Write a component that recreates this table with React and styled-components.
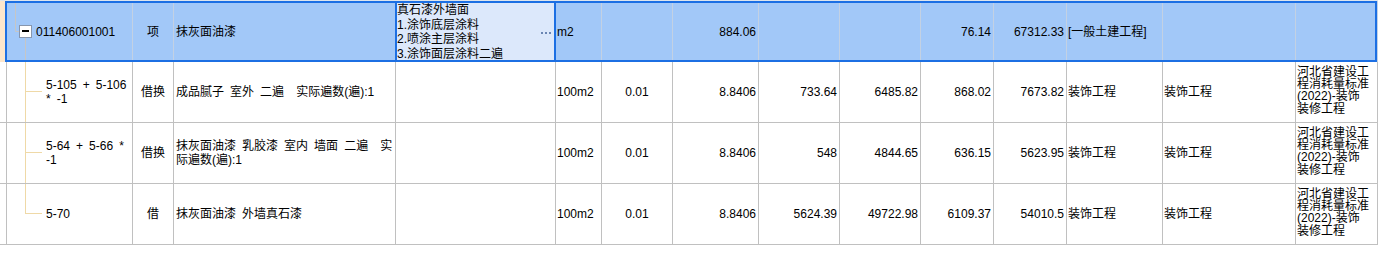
import React from "react";
import styled, { createGlobalStyle, css } from "styled-components";

const GlobalStyle = createGlobalStyle`
  *, *::before, *::after { box-sizing: border-box; }
  html, body { margin: 0; padding: 0; background: #fff; }
  body {
    font-family: "Liberation Sans", "Noto Sans CJK SC", sans-serif;
    font-size: 12px;
    color: #000;
  }
`;

const COLS = "7px 126px 41px 222px 160px 46px 71px 86px 81px 81px 73px 73px 96px 133px 82px";
const BLUE = "#1c6fe3";
const LINE = "#c0c0c0";
const TAN = "#efd9a7";

const Table = styled.div`
  width: 1378px;
`;

const Row = styled.div`
  display: grid;
  grid-template-columns: ${COLS};
  height: 61px;
  position: relative;

  ${p => p.$selected && css`
    height: 62px;
    border-top: 1px solid #dfe5ec;
    background: #a2c8f8;

    &::after {
      content: "";
      position: absolute;
      left: 5px;
      right: 1px;
      top: 0;
      bottom: 0;
      border: 2px solid ${BLUE};
      pointer-events: none;
    }
  `}
`;

const justify = { left: "flex-start", center: "center", right: "flex-end" };

const Cell = styled.div`
  display: flex;
  align-items: center;
  justify-content: ${p => justify[p.$align || "left"]};
  padding: 0 ${p => (p.$align === "right" ? 2 : 0)}px 0 ${p => (p.$align === "left" || !p.$align ? p.$pl ?? 1 : 0)}px;
  border-right: 1px solid ${p => (p.$sel ? "#c3d1e3" : LINE)};
  border-bottom: ${p => (p.$sel ? "none" : `1px solid ${LINE}`)};
  line-height: 14px;
  white-space: pre;
  word-spacing: 2.7px;
  min-width: 0;
  overflow: hidden;
`;

const Marker = styled.div`
  background: ${p => (p.$sel ? "#fce6cc" : "#fff")};
  border-right: ${p => (p.$sel ? "none" : `1px solid ${LINE}`)};
  border-bottom: ${p => (p.$sel ? "none" : `1px solid ${LINE}`)};
`;

const TreeCell = styled(Cell)`
  padding: 0;
  align-items: stretch;
  svg { flex: none; display: block; }
`;

const TreeText = styled.div`
  display: flex;
  flex-direction: column;
  justify-content: center;
`;

const FeatureCell = styled.div`
  margin-left: -1px;
  display: flex;
  align-items: center;
  background: #dce8fb;
  box-shadow: inset 0 0 0 2px ${BLUE};
  padding: 2px 3px 0 2px;
  position: relative;
  z-index: 1;
`;

const FeatureText = styled.div`
  flex: 1;
  align-self: flex-start;
  line-height: 14.5px;
  white-space: pre;
`;

const LibCell = styled(Cell)`
  align-items: flex-start;
  padding-top: 4px;
  line-height: 12.2px;
`;

const Lines = ({ lines }) => (
  <div>
    {lines.map((l, i) => (
      <div key={i}>{l}</div>
    ))}
  </div>
);

const Dots = () => (
  <svg width="12" height="2" viewBox="0 0 12 2">
    <rect x="0" y="0" width="2" height="2" fill="#6b86b3" />
    <rect x="4" y="0" width="2" height="2" fill="#6b86b3" />
    <rect x="8" y="0" width="2" height="2" fill="#6b86b3" />
  </svg>
);

const ParentBranch = () => (
  <svg width="29" height="61">
    <path d="M8.5 0V30.5H12" stroke="#c6c6c6" fill="none" />
    <rect x="12.5" y="24.5" width="12" height="12" fill="#fff" stroke="#8796ad" />
    <rect x="15" y="29" width="7" height="2" fill="#000" />
    <path d="M18.5 37V61" stroke="#c6c6c6" />
  </svg>
);

const ChildBranch = ({ last }) => (
  <svg width="39" height="60">
    <path d={last ? "M18.5 0V29.5" : "M18.5 0V60"} stroke={TAN} />
    <path d="M18 29.5H35" stroke={TAN} />
  </svg>
);

const LIB = ["河北省建设工", "程消耗量标准", "(2022)-装饰", "装修工程"];

const children = [
  {
    code: ["5-105 + 5-106", "* -1"],
    type: "借换",
    name: ["成品腻子 室外 二遍  实际遍数(遍):1"],
    price: "733.64",
    total: "6485.82",
    cprice: "868.02",
    ctotal: "7673.82",
  },
  {
    code: ["5-64 + 5-66 *", "-1"],
    type: "借换",
    name: ["抹灰面油漆 乳胶漆 室内 墙面 二遍  实", "际遍数(遍):1"],
    price: "548",
    total: "4844.65",
    cprice: "636.15",
    ctotal: "5623.95",
  },
  {
    code: ["5-70"],
    type: "借",
    name: ["抹灰面油漆 外墙真石漆"],
    price: "5624.39",
    total: "49722.98",
    cprice: "6109.37",
    ctotal: "54010.5",
  },
];

const ChildRow = ({ item, last }) => (
  <Row>
    <Marker />
    <TreeCell>
      <ChildBranch last={last} />
      <TreeText>
        <Lines lines={item.code} />
      </TreeText>
    </TreeCell>
    <Cell $align="center">{item.type}</Cell>
    <Cell $pl={2}>
      <Lines lines={item.name} />
    </Cell>
    <Cell />
    <Cell>100m2</Cell>
    <Cell $align="center">0.01</Cell>
    <Cell $align="right">8.8406</Cell>
    <Cell $align="right">{item.price}</Cell>
    <Cell $align="right">{item.total}</Cell>
    <Cell $align="right">{item.cprice}</Cell>
    <Cell $align="right">{item.ctotal}</Cell>
    <Cell>装饰工程</Cell>
    <Cell>装饰工程</Cell>
    <LibCell>
      <Lines lines={LIB} />
    </LibCell>
  </Row>
);

const App = () => (
  <>
    <GlobalStyle />
    <Table>
      <Row $selected>
        <Marker $sel />
        <TreeCell $sel>
          <ParentBranch />
          <TreeText>011406001001</TreeText>
        </TreeCell>
        <Cell $sel $align="center">项</Cell>
        <Cell $sel $pl={2}>抹灰面油漆</Cell>
        <FeatureCell>
          <FeatureText>
            <Lines lines={["真石漆外墙面", "1.涂饰底层涂料", "2.喷涂主层涂料", "3.涂饰面层涂料二遍"]} />
          </FeatureText>
          <Dots />
        </FeatureCell>
        <Cell $sel>m2</Cell>
        <Cell $sel />
        <Cell $sel $align="right">884.06</Cell>
        <Cell $sel />
        <Cell $sel />
        <Cell $sel $align="right">76.14</Cell>
        <Cell $sel $align="right">67312.33</Cell>
        <Cell $sel>[一般土建工程]</Cell>
        <Cell $sel />
        <Cell $sel />
      </Row>
      {children.map((c, i) => (
        <ChildRow key={i} item={c} last={i === children.length - 1} />
      ))}
    </Table>
  </>
);

export default App;
